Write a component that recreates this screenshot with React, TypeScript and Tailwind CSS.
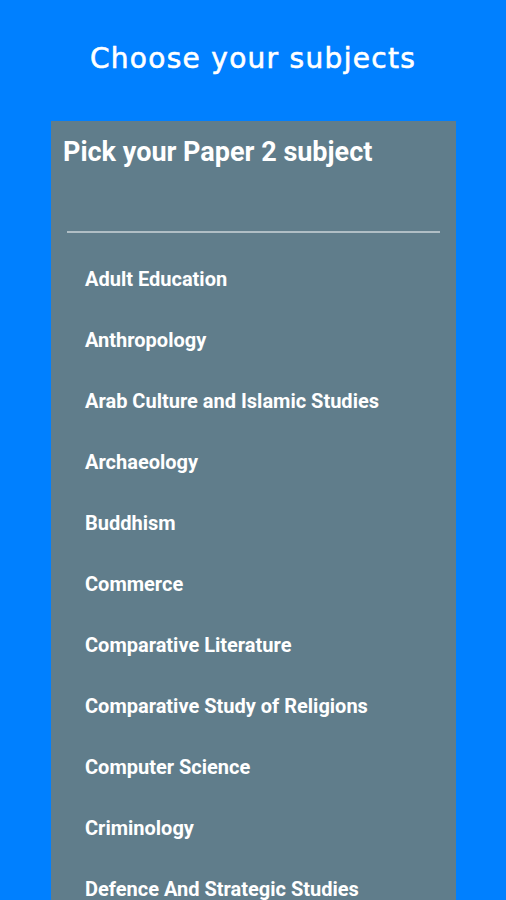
const subjects = [
  'Adult Education',
  'Anthropology',
  'Arab Culture and Islamic Studies',
  'Archaeology',
  'Buddhism',
  'Commerce',
  'Comparative Literature',
  'Comparative Study of Religions',
  'Computer Science',
  'Criminology',
  'Defence And Strategic Studies',
  'Economics',
]

function App() {
  return (
    <div className="h-[900px] overflow-hidden bg-[#0080ff]">
      <div className="flex h-[121px] items-center justify-center pb-[4px]">
        <h1 className="font-['DejaVu_Sans',sans-serif] text-[28px] tracking-[1.3px] text-white [-webkit-text-stroke:0.6px_white]">
          Choose your subjects
        </h1>
      </div>
      <div className="ml-[51px] w-[405px] bg-[#607d8b] font-['Roboto',sans-serif]">
        <h2 className="px-[12px] pt-[14px] text-[27px] font-bold leading-[34px] text-white">
          Pick your Paper 2 subject
        </h2>
        <div className="mx-[16px] mt-[62px] h-[2px] bg-[#b0bec5]" />
        <ul className="pt-[15px]">
          {subjects.map((s) => (
            <li
              key={s}
              className="flex h-[61px] items-center pl-[34px] text-[20px] font-bold text-white"
            >
              {s}
            </li>
          ))}
        </ul>
      </div>
    </div>
  )
}

export default App
